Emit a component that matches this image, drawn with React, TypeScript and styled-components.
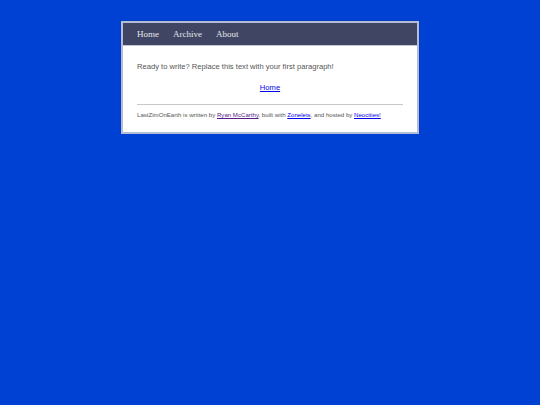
import React from "react";
import styled, { createGlobalStyle } from "styled-components";

const GlobalStyle = createGlobalStyle`
  html, body {
    margin: 0;
    padding: 0;
    background: #0041d4;
  }
  body {
    font-family: "Liberation Sans", Arial, sans-serif;
  }
`;

const Page = styled.div`
  padding-top: 21px;
  display: flex;
  justify-content: center;
`;

const Container = styled.div`
  width: 294px;
  background: #fff;
  border: 2px solid #b4bcd6;
  box-shadow: 0 0 1px 0 rgba(20, 30, 80, 0.6);
`;

const Nav = styled.nav`
  display: flex;
  gap: 14px;
  height: 22px;
  align-items: center;
  padding: 0 14px;
  background: #3f4562;
  border-bottom: 1px solid #c4c8d6;
`;

const NavLink = styled.a`
  font-family: "Liberation Serif", "Times New Roman", serif;
  font-size: 9px;
  color: #e6e7ee;
  text-decoration: none;
`;

const Main = styled.main`
  padding: 16px 14px 13px;
  color: #555;
`;

const Paragraph = styled.p<{ $center?: boolean }>`
  margin: 0 0 11px;
  font-size: 7.6px;
  line-height: 10px;
  text-align: ${({ $center }) => ($center ? "center" : "left")};
`;

const Link = styled.a<{ $visited?: boolean }>`
  color: ${({ $visited }) => ($visited ? "#551a8b" : "#0000ee")};
  text-decoration: underline;
`;

const Rule = styled.hr`
  border: 0;
  border-top: 1px solid #c8c8c8;
  margin: 6px 0 6px;
`;

const Footer = styled.footer`
  font-size: 6.1px;
  line-height: 8px;
  color: #555;
`;

export default function App() {
  return (
    <>
      <GlobalStyle />
      <Page>
        <Container>
          <Nav>
            <NavLink href="#">Home</NavLink>
            <NavLink href="#">Archive</NavLink>
            <NavLink href="#">About</NavLink>
          </Nav>
          <Main>
            <Paragraph>
              Ready to write? Replace this text with your first paragraph!
            </Paragraph>
            <Paragraph $center>
              <Link href="#">Home</Link>
            </Paragraph>
            <Rule />
            <Footer>
              LastZimOnEarth is written by{" "}
              <Link href="#" $visited>
                Ryan McCarthy
              </Link>
              , built with <Link href="#">Zonelets</Link>, and hosted by{" "}
              <Link href="#">Neocities!</Link>
            </Footer>
          </Main>
        </Container>
      </Page>
    </>
  );
}
